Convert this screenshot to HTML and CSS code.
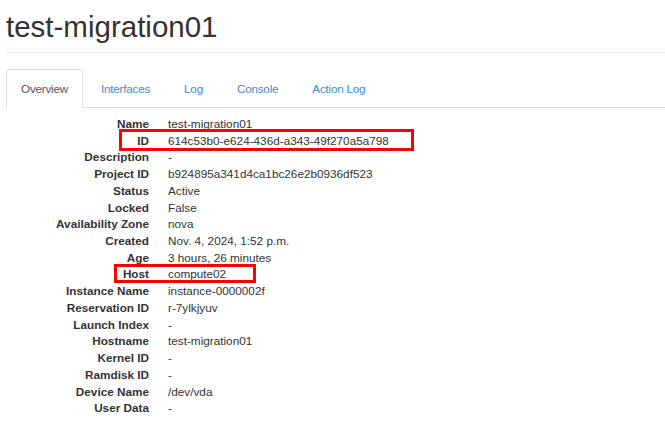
FILE: index.html
```html
<!DOCTYPE html>
<html>
<head>
<meta charset="utf-8">
<link rel="stylesheet" href="styles.css">
</head>
<body>
<div class="page">
  <h1 class="title">test-migration01</h1>
  <ul class="tabs">
    <li class="tab active"><a>Overview</a></li>
    <li class="tab"><a>Interfaces</a></li>
    <li class="tab"><a>Log</a></li>
    <li class="tab"><a>Console</a></li>
    <li class="tab"><a>Action Log</a></li>
  </ul>
  <dl class="details">
    <dt>Name</dt><dd>test-migration01</dd>
    <dt>ID</dt><dd>614c53b0-e624-436d-a343-49f270a5a798</dd>
    <dt>Description</dt><dd>-</dd>
    <dt>Project ID</dt><dd>b924895a341d4ca1bc26e2b0936df523</dd>
    <dt>Status</dt><dd>Active</dd>
    <dt>Locked</dt><dd>False</dd>
    <dt>Availability Zone</dt><dd>nova</dd>
    <dt>Created</dt><dd>Nov. 4, 2024, 1:52 p.m.</dd>
    <dt>Age</dt><dd>3 hours, 26 minutes</dd>
    <dt>Host</dt><dd>compute02</dd>
    <dt>Instance Name</dt><dd>instance-0000002f</dd>
    <dt>Reservation ID</dt><dd>r-7ylkjyuv</dd>
    <dt>Launch Index</dt><dd>-</dd>
    <dt>Hostname</dt><dd>test-migration01</dd>
    <dt>Kernel ID</dt><dd>-</dd>
    <dt>Ramdisk ID</dt><dd>-</dd>
    <dt>Device Name</dt><dd>/dev/vda</dd>
    <dt>User Data</dt><dd>-</dd>
  </dl>
  <div class="mark mark-id"></div>
  <div class="mark mark-host"></div>
</div>
</body>
</html>
```
FILE: styles.css
```css
html, body {
  margin: 0;
  padding: 0;
  background: #fff;
}
body {
  font-family: "Liberation Sans", Arial, sans-serif;
  font-size: 11.75px;
  color: #333;
}
.page {
  position: relative;
  padding: 0 0 0 6px;
}
.title {
  margin: 0;
  padding: 12px 0 11px 0;
  font-size: 29.5px;
  font-weight: normal;
  line-height: 29px;
  color: #333;
  border-bottom: 1px solid #eee;
}
.tabs {
  list-style: none;
  margin: 16px 0 0 0;
  padding: 0;
  display: flex;
  border-bottom: 1px solid #ddd;
}
.tab {
  margin: 0 2px -1px 0;
}
.tab a {
  display: block;
  padding: 10px 15px;
  line-height: 17px;
  letter-spacing: -0.25px;
  border: 1px solid transparent;
  border-radius: 4px 4px 0 0;
  color: #428bca;
}
.tab.active a {
  padding: 10px 14px 10px 14px;
  color: #555;
  border-color: #ddd;
  border-bottom-color: #fff;
  background: #fff;
}
.details {
  margin: 8px 0 0 0;
  display: grid;
  grid-template-columns: 143px 1fr;
  column-gap: 19px;
  line-height: 16.72px;
}
.details dt {
  text-align: right;
  font-weight: bold;
}
.details dd {
  margin: 0;
}
.mark {
  position: absolute;
  border: 3px solid #f00;
  box-sizing: border-box;
}
.mark-id {
  left: 119px;
  top: 129px;
  width: 295px;
  height: 22px;
}
.mark-host {
  left: 114px;
  top: 264px;
  width: 142px;
  height: 19px;
}
```
